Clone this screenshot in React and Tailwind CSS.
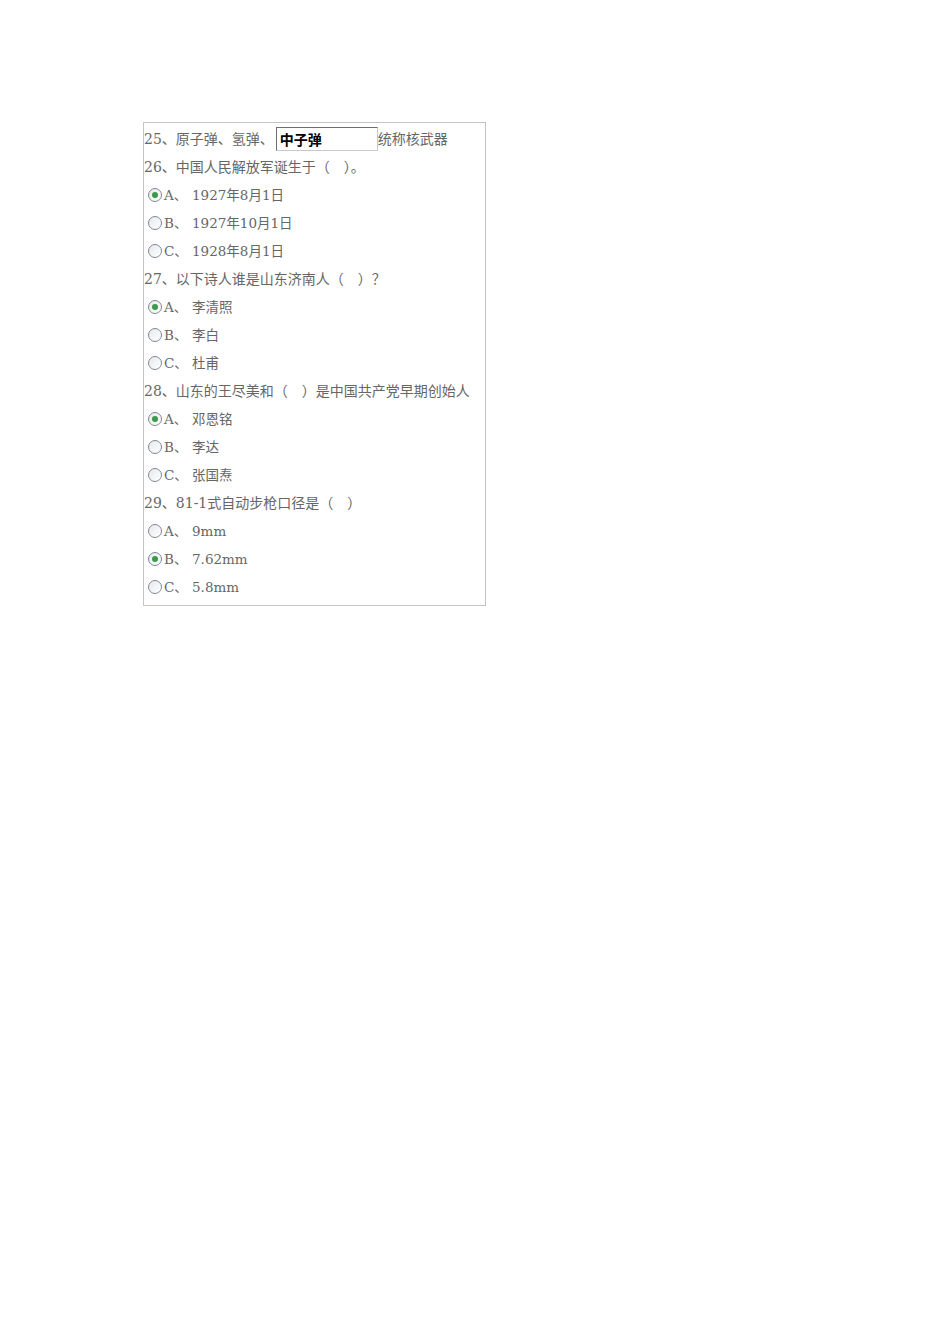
import React from "react";

const questions = [
  {
    title: "26、中国人民解放军诞生于（　）。",
    options: [
      { key: "A", text: "1927年8月1日", checked: true },
      { key: "B", text: "1927年10月1日" },
      { key: "C", text: "1928年8月1日" },
    ],
  },
  {
    title: "27、以下诗人谁是山东济南人（　）？",
    options: [
      { key: "A", text: "李清照", checked: true },
      { key: "B", text: "李白" },
      { key: "C", text: "杜甫" },
    ],
  },
  {
    title: "28、山东的王尽美和（　）是中国共产党早期创始人",
    options: [
      { key: "A", text: "邓恩铭", checked: true },
      { key: "B", text: "李达" },
      { key: "C", text: "张国焘" },
    ],
  },
  {
    title: "29、81-1式自动步枪口径是（　）",
    options: [
      { key: "A", text: "9mm" },
      { key: "B", text: "7.62mm", checked: true },
      { key: "C", text: "5.8mm" },
    ],
  },
];

function Radio({ checked }) {
  return (
    <span className="flex h-[14px] w-[14px] items-center justify-center rounded-full border border-[#7d8896] bg-gradient-to-br from-[#e6e9ed] to-white">
      {checked && <span className="h-[6px] w-[6px] rounded-full bg-[#3a9a4a]" />}
    </span>
  );
}

export default function App() {
  return (
    <div className="min-h-[1344px] w-[950px] bg-white pl-[143px] pt-[122px]">
      <div
        className="w-[343px] border border-[#c4c4c4] pb-[4px] pt-[2px] text-[14px] text-[#666]"
        style={{ fontFamily: '"DejaVu Serif", "Noto Sans CJK SC", serif' }}
      >
        <div className="flex h-[28px] items-center">
          <span>25、原子弹、氢弹、</span>
          <span
            className="ml-[2px] flex h-[24px] w-[102px] items-start border border-t-[#6f6f6f] border-l-[#6f6f6f] border-r-[#c9c9c9] border-b-[#c9c9c9] px-[3px] pt-[1px] text-[14px] font-bold text-black"
            style={{ fontFamily: '"Noto Sans CJK SC", sans-serif' }}
          >
            中子弹
          </span>
          <span>统称核武器</span>
        </div>
        {questions.map((q) => (
          <div key={q.title}>
            <div className="flex h-[28px] items-center">{q.title}</div>
            {q.options.map((o) => (
              <div key={o.key} className="flex h-[28px] items-center pl-[4px]">
                <Radio checked={o.checked} />
                <span className="ml-[2px] w-[28px] text-[13.5px]">{o.key}、</span>
                <span className="text-[13.5px]">{o.text}</span>
              </div>
            ))}
          </div>
        ))}
      </div>
    </div>
  );
}
